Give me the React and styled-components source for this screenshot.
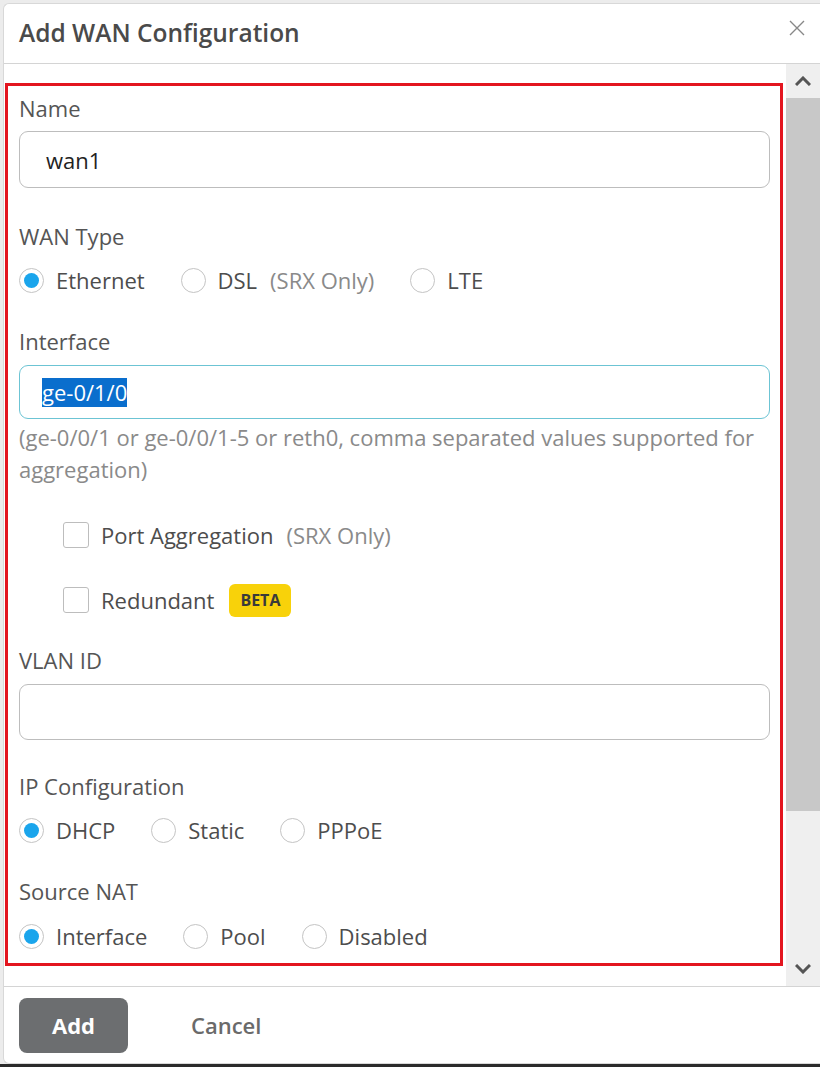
import styled, { createGlobalStyle } from "styled-components";

const GlobalStyle = createGlobalStyle`
  html, body {
    margin: 0;
    padding: 0;
    background: #2b2b2b;
  }
  body {
    font-family: "Open Sans", "Liberation Sans", sans-serif;
  }
`;

const Page = styled.div`
  width: 820px;
  height: 1064px;
  background: #ececec;
  padding: 3px 0 0 3px;
  box-sizing: border-box;
  overflow: hidden;
`;

const Modal = styled.div`
  height: 1061px;
  background: #fff;
  border: 1px solid #d8d8d8;
  border-right: none;
  border-radius: 6px 0 0 6px;
  display: flex;
  flex-direction: column;
  box-sizing: border-box;
`;

const Header = styled.div`
  height: 59px;
  flex-shrink: 0;
  display: flex;
  align-items: center;
  justify-content: space-between;
  padding: 0 12px 0 15px;
  border-bottom: 1px solid #d4d4d4;
`;

const Title = styled.h2`
  margin: 0;
  font-size: 24.5px;
  font-weight: 600;
  color: #4a4a4a;
  padding-bottom: 2px;
`;

const CloseButton = styled.button`
  border: none;
  background: none;
  padding: 0;
  width: 22px;
  height: 22px;
  margin-top: -8px;
  cursor: pointer;
`;

const Body = styled.div`
  flex: 1;
  display: flex;
  min-height: 0;
`;

const Content = styled.div`
  flex: 1;
  padding: 19px 3px 0 1px;
`;

const Highlight = styled.div`
  border: 3px solid #e3151f;
  padding: 7px 10px 0 11px;
  height: 883px;
  box-sizing: border-box;
`;

const Field = styled.div`
  display: flex;
  flex-direction: column;
  margin-top: ${(p) => p.$mt || 0}px;
`;

const Label = styled.label`
  font-size: 22px;
  color: #555;
  line-height: 30px;
  margin-bottom: ${(p) => p.$space || 8}px;
`;

const TextInput = styled.div`
  box-sizing: border-box;
  border: 1px solid ${(p) => (p.$focused ? "#6cc4d4" : "#bdbdbd")};
  border-radius: 9px;
  display: flex;
  align-items: center;
  padding: 0 ${(p) => p.$pad || 26}px;
  font-size: 22px;
  color: #222;
  height: ${(p) => p.$h || 57}px;
`;

const Selected = styled.span`
  background: #0a6ecd;
  color: #fff;
  line-height: 29px;
`;

const Help = styled.p`
  margin: 2px 0 0;
  font-size: 22px;
  line-height: 32px;
  color: #8a8a8a;
`;

const RadioRow = styled.div`
  display: flex;
  align-items: center;
  height: 36px;
`;

const RadioOption = styled.label`
  display: flex;
  align-items: center;
  gap: 12px;
  margin-right: 36px;
  font-size: 22px;
  color: #4d4d4d;
`;

const RadioCircle = styled.span`
  width: 25px;
  height: 25px;
  border-radius: 50%;
  border: 1px solid #c4c4c4;
  box-sizing: border-box;
  display: flex;
  align-items: center;
  justify-content: center;
  background: #fff;
  &::after {
    content: "";
    width: 15px;
    height: 15px;
    border-radius: 50%;
    background: ${(p) => (p.$checked ? "#1aa5ec" : "transparent")};
  }
`;

const Note = styled.span`
  color: #8a8a8a;
  margin-left: 13px;
`;

const CheckRow = styled.label`
  display: flex;
  align-items: center;
  gap: 12px;
  padding-left: 44px;
  height: 36px;
  font-size: 22px;
  color: #4d4d4d;
  margin-top: ${(p) => p.$mt || 0}px;
`;

const CheckBox = styled.span`
  width: 26px;
  height: 26px;
  border: 1px solid #bdbdbd;
  border-radius: 3px;
  box-sizing: border-box;
  background: #fff;
`;

const Badge = styled.span`
  background: #f8d20a;
  color: #3a3a3a;
  font-size: 16px;
  font-weight: 700;
  border-radius: 6px;
  padding: 0 11px;
  height: 33px;
  line-height: 33px;
  margin-left: 3px;
`;

const ScrollBar = styled.div`
  width: 34px;
  flex-shrink: 0;
  background: #efefef;
  display: flex;
  flex-direction: column;
  align-items: stretch;
`;

const ScrollButton = styled.div`
  height: 34px;
  display: flex;
  align-items: center;
  justify-content: center;
`;

const Thumb = styled.div`
  height: 713px;
  background: #c8c8c8;
`;

const Track = styled.div`
  flex: 1;
`;

const Footer = styled.div`
  height: 76px;
  flex-shrink: 0;
  border-top: 1px solid #d4d4d4;
  display: flex;
  align-items: center;
  padding: 0 0 0 15px;
  gap: 63px;
`;

const PrimaryButton = styled.button`
  width: 109px;
  height: 55px;
  border: none;
  border-radius: 8px;
  background: #6c6e70;
  color: #fff;
  font-family: inherit;
  font-size: 22px;
  font-weight: 700;
`;

const LinkButton = styled.button`
  border: none;
  background: none;
  font-family: inherit;
  font-size: 22px;
  font-weight: 600;
  color: #6a6a6a;
  padding: 0;
`;

function Radio({ label, note, checked }) {
  return (
    <RadioOption>
      <RadioCircle $checked={checked} />
      <span>
        {label}
        {note && <Note>{note}</Note>}
      </span>
    </RadioOption>
  );
}

function Chevron({ down }) {
  return (
    <svg width="16" height="10" viewBox="0 0 16 10">
      <path
        d={down ? "M1 1 L8 8 L15 1" : "M1 9 L8 2 L15 9"}
        fill="none"
        stroke="#555"
        strokeWidth="3"
      />
    </svg>
  );
}

export default function App() {
  return (
    <>
      <GlobalStyle />
      <Page>
        <Modal>
          <Header>
            <Title>Add WAN Configuration</Title>
            <CloseButton aria-label="Close">
              <svg width="18" height="18" viewBox="0 0 18 18">
                <path d="M2 2 L16 16 M16 2 L2 16" stroke="#888" strokeWidth="1.4" />
              </svg>
            </CloseButton>
          </Header>
          <Body>
            <Content>
              <Highlight>
                <Field>
                  <Label>Name</Label>
                  <TextInput>wan1</TextInput>
                </Field>
                <Field $mt={33}>
                  <Label $space={11}>WAN Type</Label>
                  <RadioRow>
                    <Radio label="Ethernet" checked />
                    <Radio label="DSL" note="(SRX Only)" />
                    <Radio label="LTE" />
                  </RadioRow>
                </Field>
                <Field $mt={28}>
                  <Label $space={9}>Interface</Label>
                  <TextInput $focused $h={54} $pad={22}>
                    <Selected>ge-0/1/0</Selected>
                  </TextInput>
                  <Help>
                    (ge-0/0/1 or ge-0/0/1-5 or reth0, comma separated values supported for
                    aggregation)
                  </Help>
                </Field>
                <CheckRow $mt={32}>
                  <CheckBox />
                  <span>
                    Port Aggregation
                    <Note>(SRX Only)</Note>
                  </span>
                </CheckRow>
                <CheckRow $mt={29}>
                  <CheckBox />
                  <span>Redundant</span>
                  <Badge>BETA</Badge>
                </CheckRow>
                <Field $mt={27}>
                  <Label $space={9}>VLAN ID</Label>
                  <TextInput $h={56} />
                </Field>
                <Field $mt={31}>
                  <Label $space={11}>IP Configuration</Label>
                  <RadioRow>
                    <Radio label="DHCP" checked />
                    <Radio label="Static" />
                    <Radio label="PPPoE" />
                  </RadioRow>
                </Field>
                <Field $mt={28}>
                  <Label $space={12}>Source NAT</Label>
                  <RadioRow>
                    <Radio label="Interface" checked />
                    <Radio label="Pool" />
                    <Radio label="Disabled" />
                  </RadioRow>
                </Field>
              </Highlight>
            </Content>
            <ScrollBar>
              <ScrollButton>
                <Chevron />
              </ScrollButton>
              <Thumb />
              <Track />
              <ScrollButton>
                <Chevron down />
              </ScrollButton>
            </ScrollBar>
          </Body>
          <Footer>
            <PrimaryButton>Add</PrimaryButton>
            <LinkButton>Cancel</LinkButton>
          </Footer>
        </Modal>
      </Page>
    </>
  );
}
